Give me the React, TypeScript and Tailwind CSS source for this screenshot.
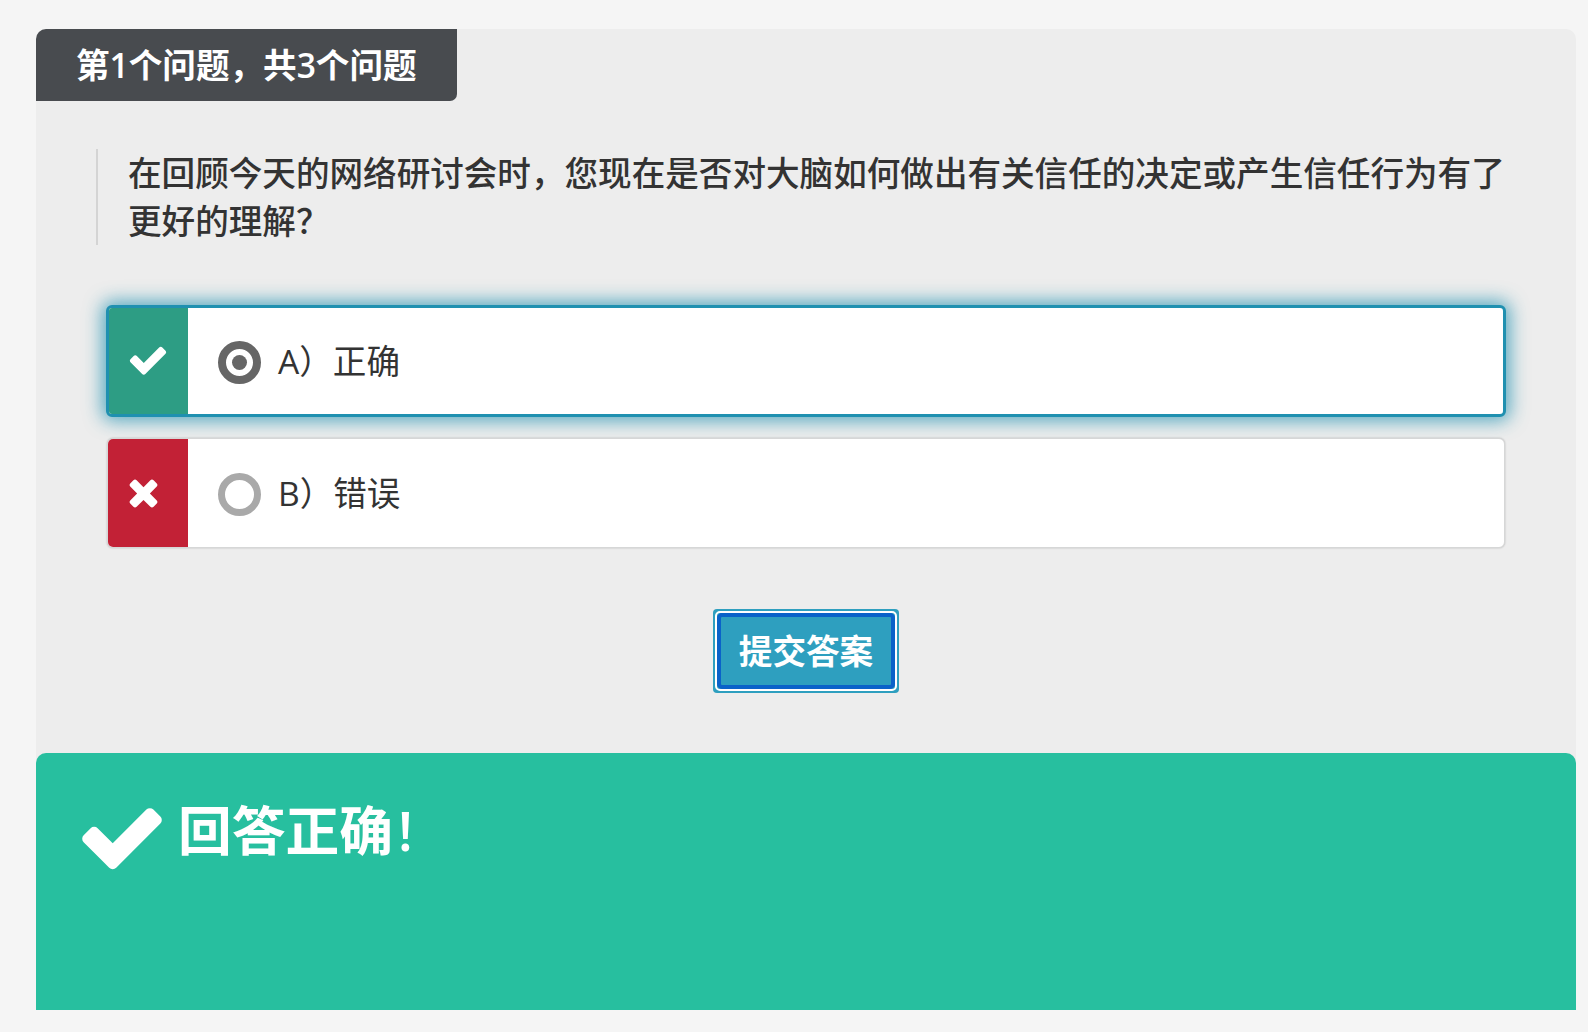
const font = "font-['Open_Sans','Noto_Sans_CJK_SC',sans-serif]";

function CheckIcon({ className }: { className: string }) {
  return (
    <svg viewBox="0 0 1792 1792" fill="currentColor" className={className}>
      <path d="M1671 566q0 40-28 68l-724 724-136 136q-28 28-68 28t-68-28l-136-136-362-362q-28-28-28-68t28-68l136-136q28-28 68-28t68 28l294 295 656-657q28-28 68-28t68 28l136 136q28 28 28 68z" />
    </svg>
  );
}

function TimesIcon({ className }: { className: string }) {
  return (
    <svg viewBox="0 0 1792 1792" fill="currentColor" className={className}>
      <path d="M1298 1322q0 40-28 68l-136 136q-28 28-68 28t-68-28l-294-294-294 294q-28 28-68 28t-68-28l-136-136q-28-28-28-68t28-68l294-294-294-294q-28-28-28-68t28-68l136-136q28-28 68-28t68 28l294 294 294-294q28-28 68-28t68 28l136 136q28 28 28 68t-28 68l-294 294 294 294q28 28 28 68z" />
    </svg>
  );
}

export default function App() {
  return (
    <div className={`${font} min-h-[1032px] bg-[#f5f5f5] pl-[36px] pr-[12px] pt-[29px] pb-[22px]`}>
      <div className="flex flex-col w-[1540px] h-[981px] rounded-t-[10px] overflow-hidden bg-[#ededed]">
        <div className="w-[421px] h-[72px] flex items-center pl-[40px] bg-[#484b4f] text-white text-[33.6px] font-semibold rounded-br-[7px] whitespace-nowrap">
          第1个问题，共3个问题
        </div>

        <div className="mt-[48px] ml-[60px] mr-[70px] border-l-2 border-[#d4d4d4] pl-[30px] h-[96px] text-[33.6px] leading-[48px] font-medium text-[#333333]">
          在回顾今天的网络研讨会时，您现在是否对大脑如何做出有关信任的决定或产生信任行为有了更好的理解？
        </div>

        <div className="mt-[60px] ml-[70px] w-[1400px] flex flex-col gap-[21px]">
          <div className="flex h-[112px] rounded-[6px] border-[3px] border-[#1f90b0] bg-white overflow-hidden shadow-[0_0_18px_4px_#1f90b0b8]">
            <div className="w-[79px] flex items-center pl-[18px] pb-[2px] bg-[#2d9d84] text-white">
              <CheckIcon className="w-[42px] h-[42px]" />
            </div>
            <div className="flex items-center pl-[30px] gap-[17px] text-[33.6px] text-[#333333]">
              <span className="flex items-center justify-center w-[43px] h-[43px] mt-[2px] rounded-full border-[8px] border-[#666666]">
                <span className="w-[15px] h-[15px] rounded-full bg-[#666666]" />
              </span>
              <span>A）正确</span>
            </div>
          </div>

          <div className="flex h-[110px] ml-[1px] w-[1398px] rounded-[6px] border border-[#d6d7d7] bg-white overflow-hidden shadow-[0_0_2px_#00000040]">
            <div className="w-[80px] flex items-center pl-[19px] pb-[2px] bg-[#c22136] text-white">
              <TimesIcon className="w-[42px] h-[42px]" />
            </div>
            <div className="flex items-center pl-[30px] gap-[17px] text-[33.6px] text-[#333333]">
              <span className="w-[43px] h-[43px] mt-[2px] rounded-full border-[7px] border-[#a9a9a9]" />
              <span>B）错误</span>
            </div>
          </div>
        </div>

        <div className="mt-[61px] flex justify-center">
          <button className="w-[186px] h-[84px] rounded-[4px] bg-[#2e9fbf] p-[2px] text-white text-[33.6px] font-semibold">
            <span className="flex h-full rounded-[5px] border-2 border-white">
              <span className="flex flex-1 items-center justify-center rounded-[5px] border-4 border-[#0a62c9]">
                提交答案
              </span>
            </span>
          </button>
        </div>

        <div className="mt-[60px] flex-1 bg-[#27bf9f] rounded-t-[10px] pl-[40px] pt-[43px] flex items-start gap-[10px] text-white">
          <CheckIcon className="w-[92px] h-[92px] -mt-[5px]" />
          <span className="text-[53.76px] leading-[70px] font-semibold">
            回答正确<span className="ml-[5px]">!</span>
          </span>
        </div>
      </div>
    </div>
  );
}
